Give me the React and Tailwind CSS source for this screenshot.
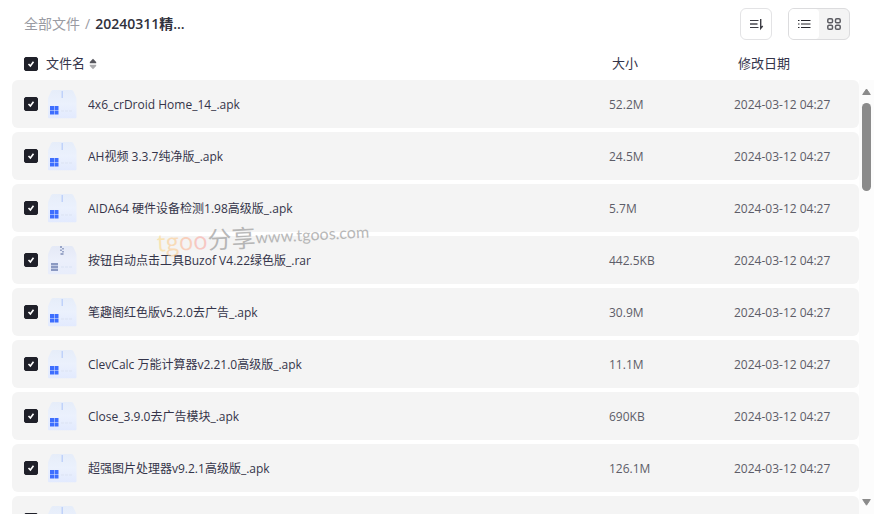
import React, { useState } from 'react';

const initialFiles = [
    { id: 1, name: '4x6_crDroid Home_14_.apk', type: 'apk', size: '52.2M', date: '2024-03-12 04:27' },
    { id: 2, name: 'AH视频 3.3.7纯净版_.apk', type: 'apk', size: '24.5M', date: '2024-03-12 04:27' },
    { id: 3, name: 'AIDA64 硬件设备检测1.98高级版_.apk', type: 'apk', size: '5.7M', date: '2024-03-12 04:27' },
    { id: 4, name: '按钮自动点击工具Buzof V4.22绿色版_.rar', type: 'rar', size: '442.5KB', date: '2024-03-12 04:27' },
    { id: 5, name: '笔趣阁红色版v5.2.0去广告_.apk', type: 'apk', size: '30.9M', date: '2024-03-12 04:27' },
    { id: 6, name: 'ClevCalc 万能计算器v2.21.0高级版_.apk', type: 'apk', size: '11.1M', date: '2024-03-12 04:27' },
    { id: 7, name: 'Close_3.9.0去广告模块_.apk', type: 'apk', size: '690KB', date: '2024-03-12 04:27' },
    { id: 8, name: '超强图片处理器v9.2.1高级版_.apk', type: 'apk', size: '126.1M', date: '2024-03-12 04:27' },
    { id: 9, name: '', type: 'apk', size: '', date: '' },
];

const FileIcon = ({ type }) => (
    <svg className="h-[30px] w-[30px] shrink-0" viewBox="0 0 30 30" aria-hidden="true">
        <defs>
            <linearGradient id={`box-${type}`} x1="0" y1="0" x2="0" y2="1">
                <stop offset="0" stopColor={type === 'apk' ? '#e6edf9' : '#e4e9f6'} />
                <stop offset="0.5" stopColor={type === 'apk' ? '#ebf1fd' : '#ebeffb'} />
                <stop offset="1" stopColor={type === 'apk' ? '#e2eafe' : '#e8edfb'} />
            </linearGradient>
        </defs>
        <path d="M5.500 1h17.500c1.200 0 2 .5 2.500 1.500L28 8c.4.900.5 1.600.5 2.500V28c0 .8-.6 1.300-1.300 1.300H1.300C.5 29.300 0 28.800 0 28V10.500C0 9.600.1 8.900.5 8L3 2.500C3.500 1.500 4.300 1 5.500 1z" fill={`url(#box-${type})`} />
        <path d="M13 22h11" stroke="#dfe6f6" strokeWidth="2" strokeDasharray="3 1" opacity="0.7" />
        {type === 'apk' ? (
            <>
                <path d="M13.500 2h1.500v7h-1.500z" fill="#bfd2fa" />
                <path d="M2 17h4v4H2zM6.500 17h4v4h-4zM2 21.500h4v4H2zM6.500 21.500h4v4h-4z" fill="#2a5fff" opacity="0.9" />
            </>
        ) : (
            <>
                <path d="M12 1h2v2h-2zM14 3h2v1.500h-2zM12 4.500h2V6h-2zM14 6h2v1.500h-2zM12.500 8h3v2h-3z" fill="#9aa6c8" />
                <path d="M3 18h7v8H3z" fill="#c0c9e3" />
                <path d="M3 18h7v2H3zM3 21h7v2H3zM3 24h7v2H3z" fill="#8b99c2" />
            </>
        )}
    </svg>
);

const CheckBox = ({ label, checked, onChange }) => (
    <span className="relative block h-3.5 w-3.5 shrink-0">
        <input
            type="checkbox"
            aria-label={label}
            checked={checked}
            onChange={onChange}
            className="block h-3.5 w-3.5 appearance-none rounded-xs border border-[#1f2029] bg-white checked:bg-[#1f2029]"
        />
        {checked && (
            <svg className="pointer-events-none absolute inset-0" viewBox="0 0 14 14" fill="none" stroke="white" strokeWidth="1.600">
                <path d="M4.500 7l1.900 2L9.500 4.800" />
            </svg>
        )}
    </span>
);

const App = () => {
    const [selected, setSelected] = useState(initialFiles.map((file) => file.id));
    const [ascending, setAscending] = useState(true);
    const [view, setView] = useState('list');

    const files = ascending ? initialFiles : [...initialFiles].reverse();
    const allSelected = selected.length === initialFiles.length;

    const toggleFile = (id) => {
        setSelected(selected.includes(id) ? selected.filter((item) => item !== id) : [...selected, id]);
    };

    const toggleAll = () => {
        setSelected(allSelected ? [] : initialFiles.map((file) => file.id));
    };

    return (
        <div className="relative flex h-screen flex-col overflow-hidden bg-white font-['Open_Sans','Noto_Sans_CJK_SC',sans-serif] text-[#34344a]">
            <header className="flex h-12 shrink-0 items-center justify-between pr-6 pl-6">
                <nav className="flex items-center gap-1 text-sm">
                    <a href="#all" className="text-[#9a9ba3]">全部文件</a>
                    <span className="px-px text-[#9a9ba3]">/</span>
                    <span className="font-semibold text-[#30313c]">20240311精...</span>
                </nav>
                <div className="flex items-center gap-4">
                    <button
                        type="button"
                        aria-label="排序"
                        onClick={() => setAscending(!ascending)}
                        className="flex h-8 w-8 items-center justify-center rounded-md border border-[#e3e3e5] bg-white"
                    >
                        <svg className="h-4 w-4" viewBox="0 0 16 16" fill="none" stroke="#3c3c43">
                            <path d="M2 4.500h8.500M2 11.500h8.500" strokeWidth="1.200" />
                            <path d="M2 8h7.500" strokeWidth="1.400" />
                            <path d="M12.700 3v9.300l2-2.300" strokeWidth="1.400" />
                        </svg>
                    </button>
                    <div className="flex h-8 overflow-hidden rounded-md border border-[#dcdcde] bg-[#f4f4f4]">
                        <button
                            type="button"
                            aria-label="列表"
                            aria-pressed={view === 'list'}
                            onClick={() => setView('list')}
                            className="flex w-[30px] items-center justify-center rounded-r-sm bg-white"
                        >
                            <svg className="h-4 w-4" viewBox="0 0 16 16" fill="none" stroke="#25252b">
                                <path d="M2 4.500h1.500M5 4.500h9.500M2 11.500h1.500M5 11.500h9.500" />
                                <path d="M2 8h1.500M5 8h9.500" strokeWidth="1.200" />
                            </svg>
                        </button>
                        <button
                            type="button"
                            aria-label="网格"
                            aria-pressed={view === 'grid'}
                            onClick={() => setView('grid')}
                            className="flex w-[30px] items-center justify-center"
                        >
                            <svg className="h-4 w-4" viewBox="0 0 16 16" fill="none" stroke="#5c5c62" strokeWidth="1.500">
                                <rect x="1.800" y="2.700" width="4.700" height="4" rx="1.300" />
                                <rect x="9.500" y="2.700" width="4.700" height="4" rx="1.300" />
                                <rect x="1.800" y="9.300" width="4.700" height="4" rx="1.300" />
                                <rect x="9.500" y="9.300" width="4.700" height="4" rx="1.300" />
                            </svg>
                        </button>
                    </div>
                </div>
            </header>

            <div className="flex min-h-0 flex-1 pl-3">
                <div className="min-w-0 flex-1 overflow-hidden">
                    <table className="w-full table-fixed border-separate border-spacing-x-0 border-spacing-y-1 text-left">
                        <colgroup>
                            <col />
                            <col className="w-[125px]" />
                            <col className="w-[141px]" />
                        </colgroup>
                        <thead className="text-[13px]">
                            <tr className="h-6">
                                <th className="p-0 pl-3 font-normal">
                                    <div className="flex items-center gap-2">
                                        <CheckBox label="全选" checked={allSelected} onChange={toggleAll} />
                                        <button type="button" onClick={() => setAscending(!ascending)} className="flex items-center gap-1">
                                            文件名
                                            <svg className="h-3 w-2" viewBox="0 0 8 12">
                                                <path d="M4 .8L7.200 4v1.200H.8V4z" fill="#55555c" />
                                                <path d="M4 11.200L.8 8V6.800h6.400V8z" fill="#aaaaad" />
                                            </svg>
                                        </button>
                                    </div>
                                </th>
                                <th className="p-0 pl-[19px] font-normal">大小</th>
                                <th className="p-0 pl-5 font-normal">修改日期</th>
                            </tr>
                        </thead>
                        <tbody className="text-xs">
                            {files.map((file) => (
                                <tr key={file.id} className="h-12 bg-[#f4f4f4]">
                                    <td className="rounded-l-md p-0 pl-3">
                                        <div className="flex items-center gap-2.5">
                                            <CheckBox label={file.name} checked={selected.includes(file.id)} onChange={() => toggleFile(file.id)} />
                                            <FileIcon type={file.type} />
                                            <span className="truncate pt-0.5">{file.name}</span>
                                        </div>
                                    </td>
                                    <td className="p-0 pt-0.5 pl-4 text-[#5d5d68]">{file.size}</td>
                                    <td className="rounded-r-md p-0 pt-0.5 pl-4 text-[#5d5d68]">{file.date}</td>
                                </tr>
                            ))}
                        </tbody>
                    </table>
                </div>

                <div className="mt-8 flex w-[15px] shrink-0 flex-col items-center bg-[#fcfcfc] py-2">
                    <svg className="h-2 w-[9px]" viewBox="0 0 9 8">
                        <path d="M4.500 1L8.300 6.500H.7z" fill="#8b8b8b" stroke="#8b8b8b" strokeLinejoin="round" />
                    </svg>
                    <div className="mt-[7px] h-[88px] w-[9px] rounded-full bg-[#8b8b8b]" />
                    <svg className="mt-auto h-2 w-[9px]" viewBox="0 0 9 8">
                        <path d="M4.500 7.200L.7 1.500h7.600z" fill="#8b8b8b" stroke="#8b8b8b" strokeLinejoin="round" />
                    </svg>
                </div>
            </div>

            <div className="pointer-events-none absolute top-[221px] left-[157px] flex -rotate-3 items-center whitespace-nowrap text-[#8d8d8d] opacity-60">
                <span className="text-2xl">
                    <span className="text-[#fbd98a]">t</span>
                    <span className="text-[#fbcb90]">g</span>
                    <span className="text-[#fbb898]">o</span>
                    <span className="text-[#f9aaa2]">o</span>
                </span>
                <span className="text-2xl">分享</span>
                <span className="font-['Lato',sans-serif] text-base">www.tgoos.com</span>
            </div>
        </div>
    );
};

export default App;
